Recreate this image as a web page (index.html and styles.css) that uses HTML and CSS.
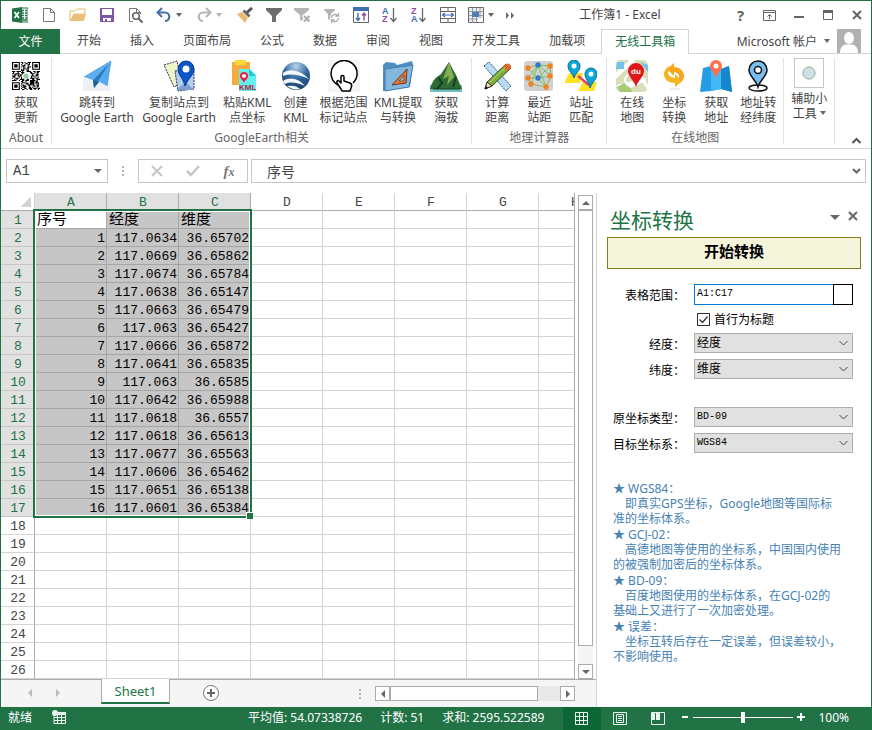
FILE: index.html
```
<!DOCTYPE html>
<html lang="zh-CN">

<head>
    <meta charset="UTF-8">
    <meta name="viewport" content="width=device-width, initial-scale=1.0">
    <title>工作簿1 - Excel</title>
    <link rel="stylesheet" href="styles.css">
</head>

<body>
<div class="window">

    <header class="titlebar">
        <div class="quick-access">
            <button class="qat" aria-label="Excel"><svg width="16" height="16" viewBox="0 0 16 16"><path d="M9 1h7v14H9z" fill="#fff" stroke="#217346"/><path d="M10 3.500h2M13 3.500h2M10 6h2M13 6h2M10 8.500h2M13 8.500h2M10 11h2M13 11h2M10 13h5" stroke="#217346" stroke-width="1.300"/><path d="M0 1.500 10 0v16L0 14.500z" fill="#217346"/><path d="m2.500 5 4.500 6M7 5l-4.500 6" stroke="#fff" stroke-width="1.700"/></svg></button>
            <button class="qat" aria-label="新建"><svg width="16" height="16" viewBox="0 0 16 16"><path d="M2.500 1.500h7l4 4v9h-11zM9.500 1.500v4h4" fill="#fff" stroke="#777"/></svg></button>
            <button class="qat" aria-label="打开"><svg width="18" height="16" viewBox="0 0 18 16"><path d="M1 14V4h5l2-2h8v4" fill="#fff" stroke="#e5b96c"/><path d="M1 14 4.500 6.500H17L15 14z" fill="#ebc07c"/></svg></button>
            <button class="qat" aria-label="保存"><svg width="16" height="16" viewBox="0 0 16 16"><path d="M1 1h14v14H1z" fill="#7f55a6"/><path d="M3 2h10v6H3zM4 11h8v3H4z" fill="#fff"/><path d="M6 12h2v2H6z" fill="#7f55a6"/></svg></button>
            <button class="qat" aria-label="打印预览"><svg width="16" height="16" viewBox="0 0 16 16"><path d="M5 14.500H1.500v-13h7l4 4V7M8.500 1.500v4h4" fill="none" stroke="#777"/><circle cx="8" cy="9" r="3.300" fill="#fff" stroke="#666" stroke-width="1.600"/><path d="m10.500 11.500 4 4" stroke="#666" stroke-width="2.200"/></svg></button>
            <button class="qat wide" aria-label="撤消"><svg width="16" height="16" viewBox="0 0 16 16"><path d="M2 5.500h7a4 4 0 0 1 0 8.500" fill="none" stroke="#4472a8" stroke-width="2.200"/><path d="M6 1 1.500 5.500 6 10" fill="none" stroke="#4472a8" stroke-width="2"/></svg><i class="caret"></i></button>
            <button class="qat wide dim" aria-label="恢复"><svg width="16" height="16" viewBox="0 0 16 16"><path d="M14 5.500H7A4 4 0 0 0 7 14" fill="none" stroke="#b5b5b5" stroke-width="2.200"/><path d="M10 1l4.500 4.500L10 10" fill="none" stroke="#b5b5b5" stroke-width="2"/></svg><i class="caret"></i></button>
            <button class="qat" aria-label="格式刷"><svg width="16" height="16" viewBox="0 0 16 16"><path d="m0 7 5-2 6 6-3 5z" fill="#ebb86c"/><path d="m5.500 4.500 2-2 6 6-2 2z" fill="#666"/><path d="m10 5.500 5-4.500" stroke="#555" stroke-width="3"/></svg></button>
            <button class="qat" aria-label="筛选"><svg width="16" height="16" viewBox="0 0 16 16"><path d="M0 1h16v2l-6 6v6H6V9L0 3z" fill="#6d6d6d"/></svg></button>
            <button class="qat" aria-label="清除筛选"><svg width="17" height="16" viewBox="0 0 17 16"><path d="M0 1h15v2L9 8v6L6 13V8L0 3z" fill="#b5b5b5"/><path d="m9 8 7 7m0-7-7 7" stroke="#fff" stroke-width="3.500"/><path d="m10 9 5.500 5.500m0-5.500L10 14.500" stroke="#aaa" stroke-width="2"/></svg></button>
            <button class="qat" aria-label="重新应用"><svg width="16" height="16" viewBox="0 0 16 16"><path d="M0 2h11v1L7 7v6l-3-1V7L0 3z" fill="#b5b5b5"/><circle cx="11" cy="11" r="5" fill="#fff"/><path d="M7.500 11a3.500 3.500 0 0 1 6-2.500M14.500 11a3.500 3.500 0 0 1-6 2.500M14.500 6v3h-3M7.500 16v-3h3" fill="none" stroke="#aaa" stroke-width="1.300"/></svg></button>
            <button class="qat" aria-label="数据透视表"><svg width="16" height="16" viewBox="0 0 16 16"><path d="M.5.5h15v15H.5z" fill="#fff" stroke="#666"/><path d="M0 0h16v4H0z" fill="#3f6fae"/><path d="M5 6v7M3 11l2 2.500L7 11" fill="none" stroke="#3f6fae" stroke-width="1.400"/><path d="M11 13.500v-7M9 8.500 11 6l2 2.500" fill="none" stroke="#8a4d9f" stroke-width="1.400"/></svg></button>
            <button class="qat" aria-label="升序"><svg width="16" height="18" viewBox="0 0 16 18"><text x="0" y="8" class="sort-blue">A</text><text x="0" y="16" class="sort-purple">Z</text><path d="M11.500 2v13M8.500 12l3 3.500 3-3.500" fill="none" stroke="#666" stroke-width="1.300"/></svg></button>
            <button class="qat" aria-label="降序"><svg width="16" height="18" viewBox="0 0 16 18"><text x="0" y="8" class="sort-purple">Z</text><text x="0" y="16" class="sort-blue">A</text><path d="M11.500 2v13M8.500 12l3 3.500 3-3.500" fill="none" stroke="#666" stroke-width="1.300"/></svg></button>
            <button class="qat" aria-label="合并单元格"><svg width="16" height="16" viewBox="0 0 16 16"><path d="M.5.5h15v15H.5zM0 4.500h16M0 11.500h16M8 0v4M8 12v4" fill="none" stroke="#666"/><path d="M2.500 8h11M5 6 2.500 8 5 10M11 6l2.500 2L11 10" fill="none" stroke="#3f6fae" stroke-width="1.200"/></svg></button>
            <button class="qat wide" aria-label="设置单元格"><svg width="16" height="16" viewBox="0 0 16 16"><path d="M.5.5h15v15H.5z" fill="#e8eef5" stroke="#666"/><path d="M.5 4.500h15M.5 8.500h15M.5 12h15M4.500.5v15M8.500.5v15M12 .5v15" stroke="#999" fill="none"/><path d="M4 5h7v5H4z" fill="#4f7cb5"/><path d="M10 11h5v4h-5z" fill="#fff"/></svg><i class="caret"></i></button>
            <button class="qat more" aria-label="更多"><svg width="9" height="7" viewBox="0 0 9 7"><path d="M0 0v7l3-3.500zM5 0v7l3-3.500z" fill="#666"/></svg></button>
        </div>
        <div class="doc-title">工作簿1 - Excel</div>
        <div class="window-buttons">
            <button class="qat help" aria-label="帮助">?</button>
            <button class="qat" aria-label="功能区显示选项"><svg width="13" height="11" viewBox="0 0 13 11"><path d="M.5.5h12v10H.5zM0 2.500h13M6.500 9V5M4.500 6.500l2-2 2 2" fill="none" stroke="#666"/></svg></button>
            <button class="qat" aria-label="最小化"><svg width="10" height="10" viewBox="0 0 10 10"><path d="M0 6h10v2H0z" fill="#666"/></svg></button>
            <button class="qat" aria-label="最大化"><svg width="10" height="10" viewBox="0 0 10 10"><path d="M.5.5h9v9H.5z" fill="none" stroke="#666"/><path d="M0 0h10v3H0z" fill="#666"/></svg></button>
            <button class="qat" aria-label="关闭"><svg width="10" height="10" viewBox="0 0 10 10"><path d="m1 1 8 8m0-8L1 9" stroke="#666" stroke-width="2"/></svg></button>
        </div>
    </header>

    <nav class="tabs">
        <button class="file-tab">文件</button>
        <button class="tab">开始</button>
        <button class="tab">插入</button>
        <button class="tab">页面布局</button>
        <button class="tab">公式</button>
        <button class="tab">数据</button>
        <button class="tab">审阅</button>
        <button class="tab">视图</button>
        <button class="tab">开发工具</button>
        <button class="tab">加载项</button>
        <button class="tab active">无线工具箱</button>
        <button class="account">Microsoft 帐户 <i class="caret"></i>
            <svg width="24" height="24" viewBox="0 0 24 24"><path d="M0 0h24v24H0z" fill="#b1b1b1"/><ellipse cx="12" cy="9" rx="5" ry="6" fill="#fff"/><path d="M3 24c0-6 3-8 6-8.500h6c3 .5 6 2.500 6 8.500z" fill="#fff"/></svg>
        </button>
    </nav>

    <section class="ribbon">
        <div class="group">
            <div class="tools">
                <button class="tool"><svg width="32" height="32" viewBox="0 0 32 32"><g transform="translate(2 2) scale(1.120)"><path d="M.5.5h6v6h-6zM18.500.5h6v6h-6zM.5 18.500h6v6h-6z" fill="none" stroke="#000"/><path d="M2 2h3v3H2zM20 2h3v3h-3zM2 20h3v3H2zM17 17h3v3h-3z"/><path d="M8 .5h2m1 0h1m2 0h3M9 1.500h1m2 0h2m1 0h1M8 2.500h1m2 0h1m2 0h2M9 3.500h3m2 0h1M8 4.500h1m1 0h1m3 0h3M10 5.500h2m1 0h2M8 6.500h1m1 0h1m1 0h1m1 0h1M8 7.500h3m2 0h2M0 8.500h3m1 0h4m1 0h1m3 0h4m2 0h2m1 0h3M1 9.500h1m3 0h1m2 0h3m5 0h2m2 0h1m1 0h2M0 10.500h2m1 0h4m2 0h1m7 0h3m2 0h1M2 11.500h2m1 0h1m1 0h2m9 0h1m2 0h3M0 12.500h3m2 0h3m9 0h3m1 0h2M1 13.500h2m3 0h1m1 0h1m8 0h1m2 0h1m2 0h1M0 14.500h1m2 0h3m2 0h1m7 0h4m1 0h2M2 15.500h1m1 0h1m2 0h4m2 0h2m3 0h2m2 0h3M0 16.500h4m2 0h1m2 0h2m1 0h3m1 0h5m1 0h1M8 17.500h2m2 0h1m3 0h1m4 0h2M9 18.500h3m1 0h1m2 0h1m1 0h1m2 0h3M8 19.500h1m3 0h3m1 0h1m4 0h1m1 0h1M9 20.500h2m3 0h6m2 0h2M8 21.500h1m1 0h3m2 0h1m3 0h2m1 0h2M9 22.500h3m3 0h2m1 0h1m3 0h1M8 23.500h1m2 0h2m2 0h3m1 0h3m1 0h2M9 24.500h2m2 0h1m2 0h2m2 0h1m2 0h1" stroke="#000"/></g><circle cx="16" cy="16" r="2.600" fill="#93cda1"/></svg><span>获取<br>更新</span></button>
            </div>
            <div class="group-name">About</div>
        </div>

        <div class="group">
            <div class="tools">
                <button class="tool wide"><svg width="32" height="32" viewBox="0 0 32 32"><path d="M2 19h27v12H2z" fill="#edf1f5"/><path d="M30 1 3 17l9 3z" fill="#5cb0f2"/><path d="M30 1 12 20l1 8 4-5z" fill="#2b78bd"/><path d="m30 1-13 20 9 5z" fill="#56a9ee"/><path d="m12 20 1 8 5-6z" fill="#1f609e"/><path d="M30 1 3 17m27-16-4 25" stroke="#3388cc" stroke-width=".6"/></svg><span>跳转到<br>Google Earth</span></button>
                <button class="tool wide"><svg width="32" height="32" viewBox="0 0 32 32"><path d="m1 5 13-4 5 22-8 4z" fill="#edf6c8" stroke="#24305e" stroke-dasharray="2 1"/><path d="M12 11l19-2v20l-16 2z" fill="#b7cdec" stroke="#24305e" stroke-dasharray="2 1"/><path d="m13 30 10-8 8 8z" fill="#7e9fd0"/><path d="M23 1a8 8 0 0 0-8 8c0 6 5 9 7 17 4-9 9-11 9-17a8 8 0 0 0-8-8z" fill="#0d55c7" stroke="#0a3c94"/><circle cx="23" cy="9" r="3.500" fill="#fff"/></svg><span>复制站点到<br>Google Earth</span></button>
                <button class="tool"><svg width="32" height="32" viewBox="0 0 32 32"><path d="M1 2h18v23H1z" fill="#f7ab3c"/><path d="M4 0h11v5H4z" fill="#fdd83c"/><path d="M8 9h11l6 6v16H8z" fill="#62f1ee"/><path d="m18 9 7 7h-7z" fill="#24c7cd"/><path d="M13 12a4 4 0 0 0-4 4c0 3 3 4 4 7 1-3 4-4 4-7a4 4 0 0 0-4-4z" fill="#e1224c"/><circle cx="13" cy="16" r="2" fill="#fff"/><text x="8" y="30" class="kml">KML</text></svg><span>粘贴KML<br>点坐标</span></button>
                <button class="tool"><svg width="32" height="32" viewBox="0 0 32 32"><defs><radialGradient id="globe" cx=".5" cy=".15" r=".9"><stop offset="0" stop-color="#b8d4ed"/><stop offset=".5" stop-color="#31659c"/><stop offset="1" stop-color="#173a63"/></radialGradient></defs><circle cx="16" cy="16" r="14" fill="url(#globe)"/><path d="M3 13c8-6 19-1 26 6-8-4-18-6-26-3zM3 21c8-5 16-2 22 5-7-3-14-5-20-2zM7 26c6-1 10 0 13 3-5 1-9 0-13-3z" fill="#f4f8fc"/></svg><span>创建<br>KML</span></button>
                <button class="tool"><svg width="32" height="32" viewBox="0 0 32 32"><path d="M0 0h32v32H0z" fill="#f4f4f4"/><path d="M10 25A13 13 0 1 1 25 23" fill="#fff" stroke="#000" stroke-width="1.500"/><path d="m13 29-4-6c-1-2 1-3 2-2l2 2v-6c0-2 3-2 3 0v4l6 2c2 1 2 3 1 5l-1 3h-8z" fill="#fff" stroke="#000" stroke-width="1.500" stroke-linejoin="round"/></svg><span>根据范围<br>标记站点</span></button>
                <button class="tool"><svg width="32" height="32" viewBox="0 0 32 32"><path d="M1 31V5l3-3 9 1 2 2 15-4 1 4-3 22z" fill="#4f8fc4"/><path d="M3 9 31 5l-4 22-24 4z" fill="#83b7dd" stroke="#3f7dae"/><path d="M10 25 25 9l-1 14z" fill="#e47a36" stroke="#683817"/><path d="m17 21 5-6v6z" fill="#83b7dd" stroke="#683817" stroke-width=".7"/></svg><span>KML提取<br>与转换</span></button>
                <button class="tool"><svg width="32" height="32" viewBox="0 0 32 32"><path d="M0 25h32v7H0z" fill="#70bdc2"/><path d="M0 29c2-7 5-11 7-12l4-3 8-12 7 13 6 14z" fill="#2f6c34"/><path d="m19 2 5 15-7 8 2-9-6 3z" fill="#83ae51"/><path d="m8 17 4 6-5 6M26 17l-3 10" stroke="#173e20" stroke-width="2" fill="none"/><path d="M3 29h27" stroke="#173e20"/></svg><span>获取<br>海拔</span></button>
            </div>
            <div class="group-name">GoogleEarth相关</div>
        </div>

        <div class="group">
            <div class="tools">
                <button class="tool"><svg width="32" height="32" viewBox="0 0 32 32"><path d="m3 6 5-4 22 24-5 5z" fill="#b8dcf5" stroke="#274d70" stroke-dasharray="2 1"/><path d="m4 29 2-7L25 4l5 4-19 18z" fill="#7fac3b" stroke="#35501c"/><path d="m4 29 2-7 5 4z" fill="#f6d7a5" stroke="#333"/><path d="m4 29 1-3 2 2z"/><path d="m22 7 3-3c3-2 6 2 5 4l-4 3z" fill="#e2692e"/><path d="M8 23 24 8" stroke="#bada75"/></svg><span>计算<br>距离</span></button>
                <button class="tool"><svg width="32" height="32" viewBox="0 0 32 32"><rect x="1" y="1" width="29" height="30" rx="3" fill="#d0d0d0"/><path d="M5 8 15 5 27 6l1 10-5 11L8 24l-3-6L15 18 27 6M5 8l10 10 13-2M15 5 8 24M15 5l8 22M15 5 5 18m23-2L15 5m0 13 8 9" fill="none" stroke="#65bd46" stroke-width=".8"/><g fill="#f18220"><circle cx="5" cy="8" r="2.700"/><circle cx="27" cy="6" r="2.700"/><circle cx="27" cy="16" r="2.700"/><circle cx="5" cy="18" r="2.700"/><circle cx="8" cy="24" r="2.700"/><circle cx="23" cy="27" r="2.700"/></g><g fill="#3277c8"><circle cx="15" cy="5" r="2.700"/><circle cx="15" cy="18" r="2.700"/></g></svg><span>最近<br>站距</span></button>
                <button class="tool"><svg width="32" height="32" viewBox="0 0 32 32"><path d="m0 21 4-8h14l-3 10H0zM13 31l5-9h14l-3 9z" fill="#ffe321"/><path d="m13 16 11 9" stroke="#df416a" stroke-width="2.500"/><path d="M9 0a6 6 0 0 0-6 6c0 5 4 6 6 12 2-6 6-7 6-12a6 6 0 0 0-6-6zM26 8a6 6 0 0 0-6 6c0 5 4 7 5 14 3-7 7-9 7-14a6 6 0 0 0-6-6z" fill="#08a8dc" stroke="#14688a"/><circle cx="9" cy="6" r="2.500" fill="#fff"/><circle cx="26" cy="14" r="2.500" fill="#fff"/></svg><span>站址<br>匹配</span></button>
            </div>
            <div class="group-name">地理计算器</div>
        </div>

        <div class="group">
            <div class="tools">
                <button class="tool"><svg width="32" height="32" viewBox="0 0 32 32"><rect width="32" height="32" rx="5" fill="#d8ddba"/><path d="M0 12 14 0h6L0 19zM17 0l15 25v6L12 0zM0 25l30-7v3L6 32z" fill="#fff"/><path d="M1 2h7v7H0zM24 2l8 3v7z" fill="#72c1e8"/><path d="m1 27 9-5 7 10H4z" fill="#a6cc75"/><circle cx="15" cy="20" r="6" fill="none" stroke="#fff" stroke-width="2"/><path d="M20 3a8 8 0 0 0-8 8c0 6 6 9 8 16 2-7 8-10 8-16a8 8 0 0 0-8-8z" fill="#df1719"/><text x="15" y="14" class="du">du</text></svg><span>在线<br>地图</span></button>
                <button class="tool"><svg width="32" height="32" viewBox="0 0 32 32"><path d="M16 3v4c6 0 10 4 10 9 0 4-3 7-6 8v-5c2-2 2-6-4-7v4L9 9z" fill="#fba51b"/><path d="M17 27v-4C10 23 6 19 6 14c0-3 2-6 5-8v5c-2 2-1 6 6 7v-4l7 7z" fill="#f5b51e"/><path d="M11 29h11" stroke="#ddd"/></svg><span>坐标<br>转换</span></button>
                <button class="tool"><svg width="32" height="32" viewBox="0 0 32 32"><path d="m3 8 8-2 10 3 8-3 3 26-11-3-10 2-11 1z" fill="#259ce4"/><path d="m11 6 10 3v20l-10 2z" fill="#43b8f6"/><path d="m21 9 8-3 3 26-11-3z" fill="#1687cd"/><path d="M16 0a6 6 0 0 0-6 6c0 5 5 6 6 13 1-7 6-8 6-13a6 6 0 0 0-6-6z" fill="#ff6f4c"/><circle cx="16" cy="6" r="2.500" fill="#fff"/></svg><span>获取<br>地址</span></button>
                <button class="tool"><svg width="32" height="32" viewBox="0 0 32 32"><ellipse cx="16" cy="28" rx="9" ry="3" fill="#fff" stroke="#111" stroke-width="1.500"/><path d="M16 1a9 9 0 0 0-9 9c0 6 7 10 9 17 2-7 9-11 9-17a9 9 0 0 0-9-9z" fill="#78bff0" stroke="#111" stroke-width="1.500"/><circle cx="16" cy="10" r="3.500" fill="#fff" stroke="#111" stroke-width="1.500"/></svg><span>地址转<br>经纬度</span></button>
            </div>
            <div class="group-name">在线地图</div>
        </div>

        <div class="group">
            <div class="tools small">
                <button class="tool"><svg class="boxed" width="30" height="30" viewBox="0 0 30 30"><circle cx="15" cy="15" r="6.500" fill="#cfdfe3" stroke="#84aa91"/></svg><span>辅助小<br>工具 <i class="caret"></i></span></button>
            </div>
        </div>
        <button class="collapse" aria-label="折叠功能区"><svg width="9" height="7" viewBox="0 0 9 7"><path d="m.5 6 4-4 4 4" fill="none" stroke="#555" stroke-width="2"/></svg></button>
    </section>

    <div class="formula-bar">
        <div class="name-box"><input type="text" aria-label="名称框" value="A1"><i class="caret"></i></div>
        <div class="dots"><i></i><i></i><i></i></div>
        <div class="formula-buttons">
            <button aria-label="取消"><svg width="12" height="12" viewBox="0 0 12 12"><path d="m1 1 10 10m0-10L1 11" stroke="#c6c6c6" stroke-width="2"/></svg></button>
            <button aria-label="输入"><svg width="14" height="12" viewBox="0 0 14 12"><path d="m1 6 4 4 8-9" fill="none" stroke="#c6c6c6" stroke-width="2.500"/></svg></button>
            <button class="fx" aria-label="插入函数">f<small>x</small></button>
        </div>
        <div class="formula-box"><input type="text" aria-label="编辑栏" value="序号"><svg width="9" height="7" viewBox="0 0 9 7"><path d="m1 1 3.500 3.500L8 1" fill="none" stroke="#666" stroke-width="2"/></svg></div>
    </div>

    <main class="workspace">
        <div class="sheet">
            <div class="sheet-body">
                <div class="grid-area">
                    <table class="grid">
                        <thead><tr id="columns"></tr></thead>
                        <tbody id="rows"></tbody>
                    </table>
                    <div class="selection"></div>
                </div>
                <div class="v-scroll">
                    <button class="arrow" aria-label="向上"><i class="up"></i></button>
                    <div class="v-thumb"></div>
                    <div class="v-track"></div>
                    <button class="arrow" aria-label="向下"><i class="down"></i></button>
                </div>
            </div>
            <div class="sheet-bar">
                <div class="sheet-nav"><i class="left"></i><i class="right"></i></div>
                <button class="sheet-tab">Sheet1</button>
                <button class="add-sheet" aria-label="新工作表"><svg width="18" height="18" viewBox="0 0 18 18"><circle cx="9" cy="9" r="7.500" fill="#fff" stroke="#777"/><path d="M9 5v8M5 9h8" stroke="#666" stroke-width="2"/></svg></button>
                <div class="dots"><i></i><i></i><i></i></div>
                <div class="h-scroll">
                    <button class="arrow" aria-label="向左"><i class="left"></i></button>
                    <div class="h-thumb"></div>
                    <div class="h-track"></div>
                    <button class="arrow" aria-label="向右"><i class="right"></i></button>
                </div>
            </div>
        </div>

        <aside class="pane">
            <div class="pane-head">
                <h2>坐标转换</h2>
                <button aria-label="任务窗格选项"><i class="caret"></i></button>
                <button aria-label="关闭窗格"><svg width="10" height="10" viewBox="0 0 10 10"><path d="m1 1 8 8m0-8L1 9" stroke="#666" stroke-width="2"/></svg></button>
            </div>
            <button class="convert">开始转换</button>
            <form class="form">
                <label for="range">表格范围：</label>
                <div class="range"><input type="text" id="range" value="A1:C17"><button type="button" aria-label="选择范围"></button></div>
                <div class="check"><input type="checkbox" id="hasTitle" checked><label for="hasTitle">首行为标题</label></div>
                <label for="lng">经度：</label>
                <select id="lng"><option>经度</option></select>
                <label for="lat">纬度：</label>
                <select id="lat"><option>维度</option></select>
                <label for="source" class="second">原坐标类型：</label>
                <select id="source" class="code second"><option>BD-09</option></select>
                <label for="target">目标坐标系：</label>
                <select id="target" class="code"><option>WGS84</option></select>
            </form>
            <div class="notes">
                <h3>★ WGS84：</h3>
                <p>即真实GPS坐标，Google地图等国际标<br>准的坐标体系。</p>
                <h3>★ GCJ-02：</h3>
                <p>高德地图等使用的坐标系，中国国内使用<br>的被强制加密后的坐标体系。</p>
                <h3>★ BD-09：</h3>
                <p>百度地图使用的坐标体系，在GCJ-02的<br>基础上又进行了一次加密处理。</p>
                <h3>★ 误差：</h3>
                <p>坐标互转后存在一定误差，但误差较小，<br>不影响使用。</p>
            </div>
        </aside>
    </main>

    <footer class="status">
        <span>就绪</span>
        <svg class="macro" width="14" height="14" viewBox="0 0 14 14"><path d="M2 4.500h11.500v9H2zM2 7.500h11M2 10.500h11M5.500 5v8M9.500 5v8" fill="none" stroke="#e9f3ed"/><path d="M6 2h8v3H6z" fill="#e9f3ed"/><circle cx="3" cy="3" r="3" fill="#e9f3ed"/></svg>
        <div class="totals">
            <span>平均值: 54.07338726</span>
            <span>计数: 51</span>
            <span>求和: 2595.522589</span>
        </div>
        <div class="views">
            <button class="active" aria-label="普通"><svg width="14" height="14" viewBox="0 0 14 14"><path d="M.5.5h12v12H.5zM4.500 0v13M8.500 0v13M0 4.500h13M0 8.500h13" fill="none" stroke="#e9f3ed"/></svg></button>
            <button aria-label="页面布局"><svg width="14" height="14" viewBox="0 0 14 14"><path d="M.5.5h13v12H.5zM3.500 2.500h7v8h-7zM5 4.500h4M5 6.500h4M5 8.500h4" fill="none" stroke="#e9f3ed"/></svg></button>
            <button aria-label="分页预览"><svg width="14" height="14" viewBox="0 0 14 14"><path d="M.5.5h13v12H.5z" fill="none" stroke="#e9f3ed"/><path d="M1 1h3v7H1zM5 1h4v7H5z" fill="#e9f3ed"/></svg></button>
        </div>
        <div class="zoom">
            <button aria-label="缩小"><svg width="8" height="8" viewBox="0 0 8 8"><path d="M1 3h6v2H1z" fill="#fff"/></svg></button>
            <input type="range" min="0" max="100" value="50" aria-label="缩放">
            <button aria-label="放大"><svg width="8" height="8" viewBox="0 0 8 8"><path d="M0 3h8v2H0zM3 0h2v8H3z" fill="#fff"/></svg></button>
            <span>100%</span>
        </div>
    </footer>
</div>

<script src="script.js"></script>
</body>

</html>
```

FILE: styles.css
```
* {
    box-sizing: border-box;
}

body {
    margin: 0;
    font-family: 'Noto Sans', 'Noto Sans CJK SC', sans-serif;
    font-size: 12px;
    color: #444;
    background-color: #fff;
}

button {
    padding: 0;
    border: none;
    background: none;
    font: inherit;
    color: inherit;
}

svg {
    display: block;
    flex: none;
}

.window {
    display: flex;
    flex-direction: column;
    min-height: 100vh;
    border: 1px solid #217346;
    border-bottom: none;
}

.caret {
    display: inline-block;
    flex: none;
    border: 3px solid transparent;
    border-top: 4px solid #666;
    border-bottom: none;
}

.dim .caret {
    border-top-color: #b5b5b5;
}

/* Barre de titre */
.titlebar {
    display: flex;
    height: 28px;
}

.quick-access,
.window-buttons {
    display: flex;
    padding-left: 4px;
}

.qat {
    display: flex;
    align-items: center;
    justify-content: center;
    width: 29px;
}

.qat.wide {
    justify-content: flex-start;
    gap: 4px;
    width: 40px;
    padding-left: 6px;
}

.qat.more {
    width: 16px;
}

.help {
    font-size: 15px;
    font-weight: bold;
    color: #666;
}

.sort-blue,
.sort-purple {
    font: bold 9px 'Liberation Sans', sans-serif;
    fill: #3f6fae;
}

.sort-purple {
    fill: #8a4d9f;
}

.kml {
    font: bold 8px 'Liberation Sans', sans-serif;
    fill: #b91835;
}

.du {
    font: bold 8px 'Liberation Sans', sans-serif;
    fill: #fff;
}

.doc-title {
    flex: 1;
    line-height: 28px;
    text-align: center;
}

/* Onglets */
.tabs {
    display: flex;
    height: 25px;
    border-bottom: 1px solid #d4d4d4;
}

.file-tab {
    width: 59px;
    height: 25px;
    margin-right: 3px;
    padding-bottom: 2px;
    background-color: #217346;
    color: #fff;
}

.tab {
    padding: 0 15px 2px 14px;
}

.tab.active {
    height: 25px;
    margin-left: 1px;
    padding: 0 13px 2px;
    border: 1px solid #d4d4d4;
    border-bottom: none;
    background-color: #fff;
    color: #217346;
}

.account {
    display: flex;
    align-items: center;
    gap: 7px;
    margin-left: auto;
    padding-right: 10px;
}

/* Ruban */
.ribbon {
    display: flex;
    height: 95px;
    padding: 4px 0;
    border-bottom: 1px solid #d4d4d4;
}

.group {
    display: flex;
    flex-direction: column;
    justify-content: space-between;
    padding: 0 4px;
    border-right: 1px solid #e1e1e1;
}

.tools {
    display: flex;
    padding-top: 2px;
}

.tools.small {
    padding-top: 0;
}

.tool {
    display: flex;
    flex-direction: column;
    align-items: center;
    gap: 3px;
    min-width: 42px;
    padding: 0 3px;
    line-height: 15px;
    white-space: nowrap;
}

.tool.wide {
    min-width: 82px;
}

.boxed {
    border: 1px solid #c6c6c6;
}

.small .caret {
    margin-bottom: 3px;
}

.group-name {
    line-height: 13px;
    text-align: center;
    color: #666;
}

.collapse {
    align-self: flex-end;
    margin-left: auto;
    padding: 0 10px 0 0;
}

/* Barre de formule */
.formula-bar {
    display: flex;
    height: 44px;
    padding: 10px 5px;
    font-family: 'Liberation Mono', 'Noto Sans CJK SC', monospace;
}

.name-box,
.formula-buttons,
.formula-box {
    display: flex;
    align-items: center;
    height: 24px;
    border: 1px solid #c6c6c6;
}

.name-box {
    width: 102px;
    padding: 0 5px 0 6px;
}

.name-box .caret {
    border-width: 4px 4px 0;
}

.formula-bar input {
    flex: 1;
    min-width: 0;
    padding: 0;
    border: none;
    outline: none;
    font: inherit;
    font-size: 14px;
    color: #444;
}

.dots {
    display: flex;
    flex-direction: column;
    justify-content: center;
    gap: 2px;
    width: 30px;
    padding-left: 14px;
}

.dots i {
    width: 2px;
    height: 2px;
    background-color: #b5b5b5;
}

.formula-buttons {
    width: 110px;
    margin-right: 3px;
}

.formula-buttons button {
    display: flex;
    flex: 1;
    justify-content: center;
}

.formula-buttons .fx {
    display: block;
    font: italic bold 15px 'Liberation Serif', serif;
    color: #777;
}

.fx small {
    font-size: 12px;
}

.formula-box {
    flex: 1;
    padding: 0 4px 0 15px;
}

/* Feuille de calcul */
.workspace {
    display: flex;
    flex: 1;
}

.sheet {
    display: flex;
    flex: 1;
    flex-direction: column;
    min-width: 0;
}

.sheet-body {
    display: flex;
    flex: 1;
}

.grid-area {
    position: relative;
    flex: 1;
    min-width: 0;
    overflow: hidden;
    border-right: 1px solid #ababab;
}

.grid {
    width: 100%;
    min-width: 610px;
    table-layout: fixed;
    border-collapse: separate;
    border-spacing: 0;
    font-family: 'Liberation Mono', 'Noto Sans CJK SC', monospace;
    font-size: 13px;
}

.grid th,
.grid td {
    height: 18px;
    padding: 2px 1px 0 2px;
    border-right: 1px solid #d4d4d4;
    border-bottom: 1px solid #d4d4d4;
    overflow: hidden;
    white-space: nowrap;
    line-height: 15px;
}

.grid th {
    width: 72px;
    font-weight: normal;
}

.grid th:last-child {
    width: auto;
}

.grid thead th {
    border-bottom-color: #ababab;
}

.grid th:first-child {
    width: 34px;
    border-right-color: #ababab;
}

.grid .corner {
    background: linear-gradient(135deg, transparent 50%, #d4d4d4 50%) no-repeat right 3px bottom 3px / 10px 10px;
}

.grid thead .corner {
    border-right-color: #d4d4d4;
}

.grid th.on {
    border-right-color: #ababab;
    background-color: #e1e1e1;
    color: #217346;
}

.grid tbody th.on {
    border-bottom-color: #c6c6c6;
}

.grid td {
    text-align: right;
    color: #000;
}

.grid td.title {
    font-size: 15px;
    text-align: left;
}

.grid td.picked {
    border-color: #a6a6a6;
    background-color: #c6c6c6;
}

.grid td.current {
    background-color: #fff;
}

/* Cadre vert autour de A1:C17 */
.selection {
    position: absolute;
    top: 16px;
    left: 32px;
    width: 219px;
    height: 309px;
    border: 2px solid #217346;
    box-shadow: inset 0 0 0 1px #fff;
}

.selection::after {
    content: '';
    position: absolute;
    right: -3px;
    bottom: -3px;
    width: 6px;
    height: 6px;
    border: solid #fff;
    border-width: 1px 0 0 1px;
    background-color: #217346;
}

/* Barres de défilement */
.v-scroll {
    display: flex;
    flex-direction: column;
    width: 21px;
    padding: 2px 3px 0;
}

.arrow {
    display: flex;
    flex: none;
    align-items: center;
    justify-content: center;
    width: 15px;
    height: 15px;
    border: 1px solid #ababab;
    background-color: #fff;
}

.up,
.down,
.left,
.right {
    border: 4px solid transparent;
}

.up {
    border-top: none;
    border-bottom-color: #666;
}

.down {
    border-bottom: none;
    border-top-color: #666;
}

.left {
    border-left: none;
    border-right-color: #666;
}

.right {
    border-right: none;
    border-left-color: #666;
}

.v-thumb {
    flex: 1;
    border: 1px solid #ababab;
}

.v-track {
    height: 18px;
    background-color: #f5f5f5;
}

.sheet-bar {
    display: flex;
    height: 28px;
    border-top: 1px solid #ababab;
    background-color: #f5f5f5;
}

.sheet-nav {
    display: flex;
    align-items: center;
    gap: 24px;
    width: 100px;
    padding: 0 0 2px 27px;
    opacity: 0.4;
}

.sheet-tab {
    min-width: 69px;
    height: 25px;
    margin-top: -1px;
    padding: 0 12px;
    border: 1px solid #ababab;
    border-top: none;
    border-bottom: 2px solid #217346;
    background-color: #fff;
    font-size: 13px;
    color: #217346;
}

.add-sheet {
    margin-left: 32px;
    padding-bottom: 2px;
}

.sheet-bar .dots {
    margin-left: auto;
    width: 30px;
}

.h-scroll {
    display: flex;
    width: 200px;
    margin-right: 21px;
    padding-top: 6px;
}

.h-thumb {
    flex: 1;
    height: 15px;
    border: 1px solid #ababab;
    background-color: #fff;
}

.h-track {
    width: 22px;
    height: 15px;
    background-color: #e9e9e9;
}

/* Volet de conversion */
.pane {
    width: 275px;
    padding: 0 10px;
    border-left: 1px solid #d4d4d4;
    color: #000;
}

.pane-head {
    display: flex;
    gap: 8px;
    height: 44px;
    padding: 12px 3px 0;
}

.pane-head h2 {
    flex: 1;
    margin: 0;
    font-size: 21px;
    font-weight: normal;
    line-height: 30px;
    color: #217346;
}

.pane-head button {
    height: 22px;
}

.pane-head .caret {
    border-width: 5px 5px 0;
    vertical-align: middle;
}

.convert {
    width: 100%;
    height: 32px;
    padding-bottom: 6px;
    border: 1px solid #808020;
    background-color: #f5f5dc;
    font-size: 15px;
    font-weight: bold;
}

.form {
    display: grid;
    grid-template-columns: 72px 1fr;
    column-gap: 9px;
    row-gap: 6px;
    align-items: center;
    padding: 15px 8px 0 6px;
}

.form > label {
    padding-top: 3px;
    line-height: 16px;
    text-align: right;
    white-space: nowrap;
}

.range {
    display: flex;
    height: 21px;
}

.range input {
    flex: 1;
    min-width: 0;
    padding: 0 2px 2px;
    border: 1px solid #0078d7;
    border-right: none;
    outline: none;
    font-family: 'Liberation Mono', monospace;
    font-size: 10px;
}

.range button {
    width: 20px;
    border: 1px solid #000;
}

.check {
    display: flex;
    grid-column: 2;
    align-items: center;
    gap: 4px;
    height: 16px;
    padding-left: 3px;
}

.check input {
    appearance: none;
    width: 13px;
    height: 13px;
    margin: 0;
    border: 1px solid #333;
    background: url("data:image/svg+xml,%3Csvg xmlns='http://www.w3.org/2000/svg' viewBox='0 0 11 11'%3E%3Cpath d='m1.500 5.500 3 3 5-6' fill='none' stroke='%23333' stroke-width='1.300'/%3E%3C/svg%3E");
}

.form select {
    appearance: none;
    width: 100%;
    height: 20px;
    padding: 0 2px 1px;
    border: 1px solid #adadad;
    border-radius: 0;
    background: #e1e1e1 url("data:image/svg+xml,%3Csvg xmlns='http://www.w3.org/2000/svg' width='9' height='6'%3E%3Cpath d='m.5 1 4 4 4-4' fill='none' stroke='%23444'/%3E%3C/svg%3E") no-repeat right 4px center;
    font: inherit;
    color: #000;
}

.form select.code {
    font-family: 'Liberation Mono', monospace;
    font-size: 10px;
}

.form .second {
    margin-top: 22px;
}

.notes {
    padding: 28px 0 0 6px;
    line-height: 15px;
    white-space: nowrap;
    color: #4682b4;
}

.notes h3 {
    margin: 0;
    font-size: 12px;
    font-weight: normal;
}

.notes p {
    margin: 0 0 1px;
    text-indent: 12px;
}

/* Barre d'état */
.status {
    display: flex;
    align-items: center;
    height: 23px;
    margin: 0 -1px;
    padding: 0 23px 3px 8px;
    background-color: #217346;
    color: #fff;
}

.macro {
    margin-left: 20px;
}

.totals {
    display: flex;
    gap: 18px;
    margin: 0 19px 0 auto;
}

.views {
    display: flex;
    height: 23px;
    margin-bottom: -3px;
}

.views button {
    display: flex;
    align-items: center;
    justify-content: center;
    width: 38px;
}

.views .active {
    background-color: #0b6534;
}

.zoom {
    display: flex;
    align-items: center;
    gap: 4px;
    margin-left: 4px;
}

.zoom input {
    appearance: none;
    width: 100px;
    height: 12px;
    margin: 0;
    background: linear-gradient(#fff, #fff) no-repeat center / 100% 1px;
}

.zoom input::-webkit-slider-thumb {
    appearance: none;
    width: 4px;
    height: 11px;
    background-color: #fff;
}

.zoom span {
    margin-left: 9px;
}
```

FILE: script.js
```
const columns = 'ABCDEFGH'.split('');
const rowCount = 26;
const data = [
    ['序号', '经度', '维度'],
    [1, 117.0634, 36.65702],
    [2, 117.0669, 36.65862],
    [3, 117.0674, 36.65784],
    [4, 117.0638, 36.65147],
    [5, 117.0663, 36.65479],
    [6, 117.063, 36.65427],
    [7, 117.0666, 36.65872],
    [8, 117.0641, 36.65835],
    [9, 117.063, 36.6585],
    [10, 117.0642, 36.65988],
    [11, 117.0618, 36.6557],
    [12, 117.0618, 36.65613],
    [13, 117.0677, 36.65563],
    [14, 117.0606, 36.65462],
    [15, 117.0651, 36.65138],
    [16, 117.0601, 36.65384]
];

function addCell(row, tag, text, className) {
    const cell = document.createElement(tag);
    cell.textContent = text;
    if (className) cell.className = className;
    row.appendChild(cell);
}

const head = document.getElementById('columns');
addCell(head, 'th', '', 'corner');
columns.forEach((name, c) => addCell(head, 'th', name, c < 3 ? 'on' : ''));

const body = document.getElementById('rows');
for (let r = 0; r < rowCount; r++) {
    const row = document.createElement('tr');
    const values = data[r] || [];
    addCell(row, 'th', r + 1, data[r] ? 'on' : '');
    columns.forEach((name, c) => {
        let className = c < values.length ? 'picked' : '';
        if (r === 0 && c < 3) className += ' title';
        if (r === 0 && c === 0) className += ' current';
        addCell(row, 'td', values[c] === undefined ? '' : values[c], className);
    });
    body.appendChild(row);
}
```
